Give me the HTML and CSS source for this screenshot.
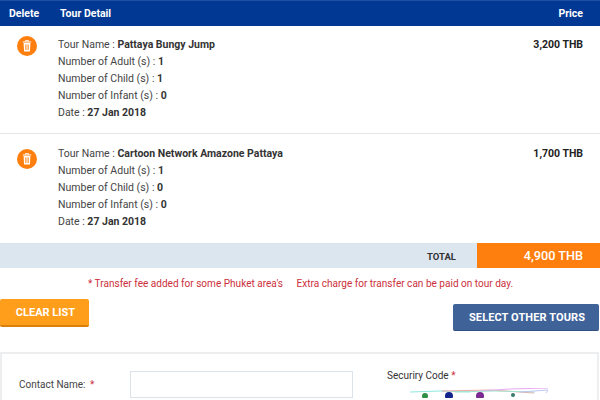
FILE: index.html
```html
<!DOCTYPE html>
<html lang="en">
<head>
    <meta charset="UTF-8">
    <title>Tour Cart</title>
    <link rel="stylesheet" href="styles.css">
</head>
<body>
    <div class="cart-head">
        <div class="col-delete">Delete</div>
        <div class="col-detail">Tour Detail</div>
        <div class="col-price">Price</div>
    </div>

    <div class="cart-row">
        <div class="col-delete">
            <span class="trash">
                <svg width="12" height="12" viewBox="0 0 12 12"><path d="M4.4 1.6V.7h3.2v.9M1.8 2h8.4" fill="none" stroke="#fff" stroke-width="1"/><path d="M2.6 3h6.8l-.5 8.4H3.1z" fill="#fff"/><path d="M4.6 4.4v5.6M6 4.4v5.6M7.4 4.4v5.6" stroke="#ff7f0e" stroke-width=".7"/></svg>
            </span>
        </div>
        <div class="col-detail">
            <p>Tour Name : <b>Pattaya Bungy Jump</b></p>
            <p>Number of Adult (s) : <b>1</b></p>
            <p>Number of Child (s) : <b>1</b></p>
            <p>Number of Infant (s) : <b>0</b></p>
            <p>Date : <b>27 Jan 2018</b></p>
        </div>
        <div class="col-price"><b>3,200 THB</b></div>
    </div>

    <div class="cart-row">
        <div class="col-delete">
            <span class="trash">
                <svg width="12" height="12" viewBox="0 0 12 12"><path d="M4.4 1.6V.7h3.2v.9M1.8 2h8.4" fill="none" stroke="#fff" stroke-width="1"/><path d="M2.6 3h6.8l-.5 8.4H3.1z" fill="#fff"/><path d="M4.6 4.4v5.6M6 4.4v5.6M7.4 4.4v5.6" stroke="#ff7f0e" stroke-width=".7"/></svg>
            </span>
        </div>
        <div class="col-detail">
            <p>Tour Name : <b>Cartoon Network Amazone Pattaya</b></p>
            <p>Number of Adult (s) : <b>1</b></p>
            <p>Number of Child (s) : <b>0</b></p>
            <p>Number of Infant (s) : <b>0</b></p>
            <p>Date : <b>27 Jan 2018</b></p>
        </div>
        <div class="col-price"><b>1,700 THB</b></div>
    </div>

    <div class="total-bar">
        <div class="total-label">TOTAL</div>
        <div class="total-value">4,900 THB</div>
    </div>

    <p class="note">* Transfer fee added for some Phuket area's <span class="note-gap">Extra charge for transfer can be paid on tour day.</span></p>

    <div class="actions">
        <a class="btn btn-clear">CLEAR LIST</a>
        <a class="btn btn-other">SELECT OTHER TOURS</a>
    </div>

    <div class="contact-box">
        <div class="contact-field">
            <label class="contact-label">Contact Name: <span class="req">*</span></label>
            <input class="contact-input" type="text">
        </div>
        <div class="captcha">
            <div class="captcha-label">Securiry Code <span class="req">*</span></div>
            <svg class="captcha-img" width="140" height="10" viewBox="0 0 140 10">
                <path d="M0 4 L30 3 L60 4" stroke="#8fe8e0" fill="none"/>
                <path d="M32 3 L80 2 L124 5" stroke="#f2a6a6" fill="none"/>
                <path d="M70 3 L100 1 L138 0" stroke="#e8a8f0" fill="none"/>
                <path d="M45 4 L85 3 L125 4" stroke="#9fe6d0" fill="none"/>
                <path d="M110 4 L138 2 L136 5" stroke="#bfc8f5" fill="none"/>
                <circle cx="15" cy="8" r="3" fill="#2f8f46"/>
                <circle cx="39" cy="8" r="4" fill="#14248a"/>
                <circle cx="70" cy="8" r="4" fill="#7a2a90"/>
                <circle cx="103" cy="7" r="2" fill="#3a7a6a"/>
            </svg>
        </div>
    </div>
</body>
</html>
```

FILE: styles.css
```css
* {
    margin: 0;
    padding: 0;
    box-sizing: border-box;
}

html, body {
    height: 400px;
    overflow: hidden;
}

body {
    font-family: Roboto, "Liberation Sans", sans-serif;
    font-size: 10.5px;
    color: #444;
    background: white;
}

.cart-head {
    display: flex;
    height: 26px;
    align-items: center;
    background: #003893;
    border-top: 1px solid #1c4f9f;
    color: white;
    font-weight: 700;
}

.cart-head .col-delete {
    width: 60px;
}

.cart-row {
    display: flex;
    height: 108px;
    padding-top: 10px;
    border-bottom: 1px solid #e6e6e6;
}

.cart-row + .cart-row {
    padding-top: 11px;
    border-bottom: none;
}

.cart-row + .cart-row .trash {
    margin-top: 4px;
}

.col-delete {
    width: 58px;
    flex: none;
    padding-left: 9px;
}

.cart-row .col-delete {
    padding-left: 17px;
}

.col-detail {
    flex: 1;
}

.col-detail p {
    height: 17px;
    line-height: 17px;
}

.col-detail b {
    color: #333;
}

.col-price {
    padding-right: 17px;
    text-align: right;
    line-height: 17px;
}

.col-price b {
    color: #222;
}

.trash {
    display: flex;
    width: 20px;
    height: 20px;
    align-items: center;
    justify-content: center;
    border-radius: 50%;
    background: #ff7f0e;
}

.total-bar {
    display: flex;
    height: 25px;
    background: #dce6ef;
    margin-top: 1px;
}

.total-label {
    width: 477px;
    padding-right: 21px;
    text-align: right;
    line-height: 28px;
    font-size: 9.5px;
    font-weight: 700;
    color: #333;
}

.total-value {
    flex: 1;
    padding-right: 17px;
    background: #ff7f0e;
    color: white;
    text-align: right;
    line-height: 25px;
    font-size: 12.7px;
    font-weight: 500;
}

.note {
    margin-top: 7px;
    padding-left: 88px;
    line-height: 17px;
    font-size: 10.05px;
    color: #cc2f3c;
}

.note-gap {
    margin-left: 11px;
}

.actions {
    display: flex;
    justify-content: space-between;
    align-items: flex-start;
    height: 53px;
    margin-top: 7px;
    padding-right: 1px;
}

.btn {
    display: block;
    border-radius: 2px;
    color: white;
    font-size: 11px;
    font-weight: 700;
    text-align: center;
}

.btn-clear {
    width: 89px;
    height: 28px;
    padding-left: 2px;
    line-height: 28px;
    background: #ff9e1b;
    border-bottom: 2px solid #d97f0a;
}

.btn-other {
    width: 146px;
    height: 27px;
    margin-top: 5px;
    padding-left: 2px;
    line-height: 28px;
    letter-spacing: .1px;
    background: #3f6399;
    border-bottom: 1px solid #2f4f80;
}

.contact-box {
    display: flex;
    height: 60px;
    padding: 17px 0 0 17px;
    border: 2px solid #eceeef;
    border-bottom: none;
    margin-right: 1px;
    font-size: 10px;
}

.contact-field {
    display: flex;
    width: 368px;
    height: 27px;
    align-items: center;
}

.contact-label {
    width: 111px;
    color: #444;
}

.req {
    color: #cc2f3c;
    margin-left: 2px;
}

.contact-input {
    width: 223px;
    height: 27px;
    border: 1px solid #dde3ea;
    background: white;
}

.captcha-label {
    margin-top: -2px;
    color: #333;
    line-height: 14px;
}

.captcha-label .req {
    margin-left: 0;
}

.captcha-img {
    display: block;
    margin: 5px 0 0 23px;
}
```
